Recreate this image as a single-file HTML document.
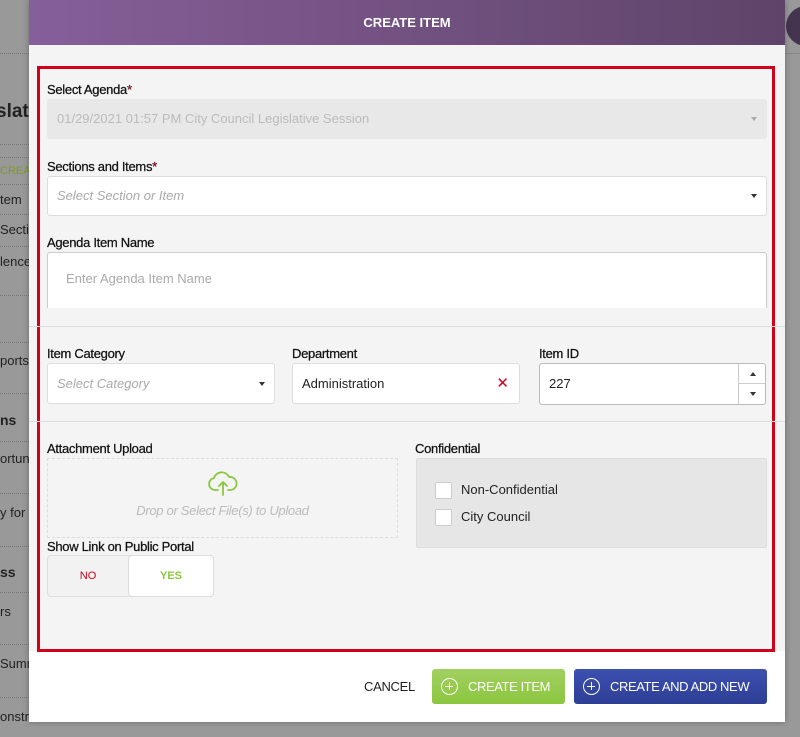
<!DOCTYPE html>
<html><head><meta charset="utf-8"><style>
*{box-sizing:border-box;margin:0;padding:0}
body{width:800px;height:737px;overflow:hidden;background:#999;font-family:"Liberation Sans",sans-serif;position:relative;font-size:13px;color:#222}
.bg{position:absolute;left:0;font-size:13px;color:#222}
.dot{position:absolute;left:0;width:29px;border-top:1px dotted #777}
.a{position:absolute}
.modal{position:absolute;left:29px;top:0;width:756px;height:722px;background:#f4f4f4;box-shadow:0 0 6px rgba(0,0,0,.3)}
.hdr{position:absolute;left:0;top:0;width:756px;height:45px;background:linear-gradient(90deg,#855f99,#5f4469);color:#fff;font-weight:bold;font-size:13px;text-align:center;line-height:45px}
.foot{position:absolute;left:0;top:651px;width:756px;height:71px;background:#fff}
.red{position:absolute;left:8px;top:66px;width:738px;height:586px;border:3px solid #d0021b}
.lbl{position:absolute;font-size:13px;color:#111;letter-spacing:-0.3px;-webkit-text-stroke:0.25px #111}
.req{color:#d0021b}
.f{position:absolute;background:#fff;border:1px solid #ddd;border-radius:3px;font-size:13px;padding-left:9px}
.ph{color:#aaa;font-style:italic}
.caret{position:absolute;right:9px;top:50%;margin-top:-2px;border:3.5px solid transparent;border-top:4px solid #333;border-bottom:0}
.hr{position:absolute;left:0;width:756px;border-top:1px solid #ddd}
.cb{display:inline-block;width:17px;height:17px;background:#fff;border:1px solid #ccc;border-radius:2px;vertical-align:middle;margin-right:9px}
.btn{position:absolute;top:669px;height:35px;border-radius:3px;color:#fff;font-size:13px;line-height:35px;letter-spacing:-0.4px}
.plus{display:inline-block;width:17px;height:17px;border:1.5px solid #fff;border-radius:50%;vertical-align:middle;margin:-2px 10px 0 9px;position:relative}
.plus:before{content:"";position:absolute;left:3px;top:6.5px;width:8px;height:1.5px;background:#fff}
.plus:after{content:"";position:absolute;left:6.5px;top:3px;width:1.5px;height:8px;background:#fff}
</style></head><body>
<div class="bg" style="top:101px;font-size:19px;font-weight:bold;left:-4px">slati</div>
<div class="bg" style="top:165px;color:#7a9a2c;font-size:11px">CREAT</div>
<div class="bg" style="top:192px">tem</div>
<div class="bg" style="top:222px">Sectio</div>
<div class="bg" style="top:254px">lence</div>
<div class="bg" style="top:353px">ports</div>
<div class="bg" style="top:412px;font-weight:bold;font-size:14px">ns</div>
<div class="bg" style="top:451px">ortuni</div>
<div class="bg" style="top:505px">y for l</div>
<div class="bg" style="top:564px;font-weight:bold;font-size:14px">ss</div>
<div class="bg" style="top:604px">rs</div>
<div class="bg" style="top:656px">Summ</div>
<div class="bg" style="top:709px">onstr</div>
<div class="dot" style="top:53px"></div><div class="dot" style="top:144px"></div><div class="dot" style="top:157px"></div><div class="dot" style="top:184px"></div><div class="dot" style="top:214px"></div><div class="dot" style="top:246px"></div><div class="dot" style="top:295px"></div><div class="dot" style="top:342px"></div><div class="dot" style="top:393px"></div><div class="dot" style="top:441px"></div><div class="dot" style="top:493px"></div><div class="dot" style="top:546px"></div><div class="dot" style="top:592px"></div><div class="dot" style="top:644px"></div><div class="dot" style="top:697px"></div>
<div class="a" style="left:785px;top:0;width:15px;height:737px;background:#999"></div>
<div class="a" style="left:786px;top:6px;width:40px;height:40px;border-radius:50%;background:#45344f"></div>
<div class="a" style="left:785px;top:53px;width:15px;border-top:1px solid #888"></div>
<div class="modal">
<div class="hdr">CREATE ITEM</div>
<div class="foot"></div>
<div class="red"></div>
<div class="lbl" style="left:18px;top:82px">Select Agenda<span class="req">*</span></div>
<div class="f" style="left:18px;top:99px;width:720px;height:40px;background:#e8e8e8;border-color:#e8e8e8;color:#bbb;line-height:38px">01/29/2021 01:57 PM City Council Legislative Session<span class="caret" style="border-top-color:#aaa"></span></div>
<div class="lbl" style="left:18px;top:159px">Sections and Items<span class="req">*</span></div>
<div class="f" style="left:18px;top:176px;width:720px;height:40px;line-height:38px"><span class="ph">Select Section or Item</span><span class="caret"></span></div>
<div class="lbl" style="left:18px;top:235px">Agenda Item Name</div>
<div class="f" style="left:18px;top:252px;width:720px;height:56px;line-height:52px;padding-left:18px;color:#aaa;border-color:#ccc;border-bottom:0;border-radius:3px 3px 0 0">Enter Agenda Item Name</div>
<div class="hr" style="top:326px"></div>
<div class="lbl" style="left:18px;top:346px">Item Category</div>
<div class="f" style="left:18px;top:363px;width:228px;height:41px;line-height:39px"><span class="ph">Select Category</span><span class="caret"></span></div>
<div class="lbl" style="left:263px;top:346px">Department</div>
<div class="f" style="left:263px;top:363px;width:228px;height:41px;line-height:39px">Administration<span style="position:absolute;right:10px;top:0;color:#d0021b;font-size:15px">✕</span></div>
<div class="lbl" style="left:510px;top:346px">Item ID</div>
<div class="f" style="left:510px;top:363px;width:227px;height:42px;line-height:40px;border-color:#bbb">227
<div class="a" style="right:0;top:0;width:27px;height:20px;border-left:1px solid #ccc;border-bottom:1px solid #ccc"><span class="caret" style="right:9px;border-top:0;border-bottom:4px solid #333"></span></div>
<div class="a" style="right:0;top:20px;width:27px;height:20px;border-left:1px solid #ccc"><span class="caret" style="right:9px"></span></div></div>
<div class="hr" style="top:421px"></div>
<div class="lbl" style="left:18px;top:441px">Attachment Upload</div>
<div class="a" style="left:18px;top:458px;width:351px;height:80px;border:1px dashed #ddd;text-align:center">
<svg width="32" height="26" viewBox="0 0 32 26" style="margin-top:12px"><path d="M11 19H8a6 6 0 0 1-1-11.9A8 8 0 0 1 22 6a6 6 0 0 1 2 13h-3M16 24V11M12 15l4-4 4 4" fill="none" stroke="#8cc63f" stroke-width="1.8" stroke-linecap="round" stroke-linejoin="round"/></svg>
<div style="color:#bbb;font-style:italic;margin-top:3px;letter-spacing:-0.3px">Drop or Select File(s) to Upload</div></div>
<div class="lbl" style="left:18px;top:539px">Show Link on Public Portal</div>
<div class="a" style="left:18px;top:555px;width:167px;height:42px;border:1px solid #ddd;border-radius:4px;background:#f2f2f2">
<div class="a" style="left:0;top:0;width:80px;height:40px;text-align:center;line-height:40px;color:#d0021b;font-size:11px">NO</div>
<div class="a" style="left:80px;top:-1px;width:86px;height:42px;background:#fff;border:1px solid #ddd;border-radius:4px;text-align:center;line-height:40px;color:#8cc63f;font-size:11px;font-weight:bold">YES</div></div>
<div class="lbl" style="left:386px;top:441px">Confidential</div>
<div class="a" style="left:387px;top:458px;width:351px;height:90px;background:#e6e6e6;border:1px solid #ddd;border-radius:2px;padding:17px 0 0 18px;line-height:27px">
<div><span class="cb"></span>Non-Confidential</div><div><span class="cb"></span>City Council</div></div>
<div class="a" style="left:335px;top:679px;font-size:13px;color:#222;letter-spacing:-0.3px">CANCEL</div>
<div class="btn" style="left:403px;width:133px;background:linear-gradient(#a2d062,#8cc63f)"><span class="plus"></span>CREATE ITEM</div>
<div class="btn" style="left:545px;width:193px;background:linear-gradient(#3c50b0,#2d3e94)"><span class="plus"></span>CREATE AND ADD NEW</div>
</div>
</body></html>
